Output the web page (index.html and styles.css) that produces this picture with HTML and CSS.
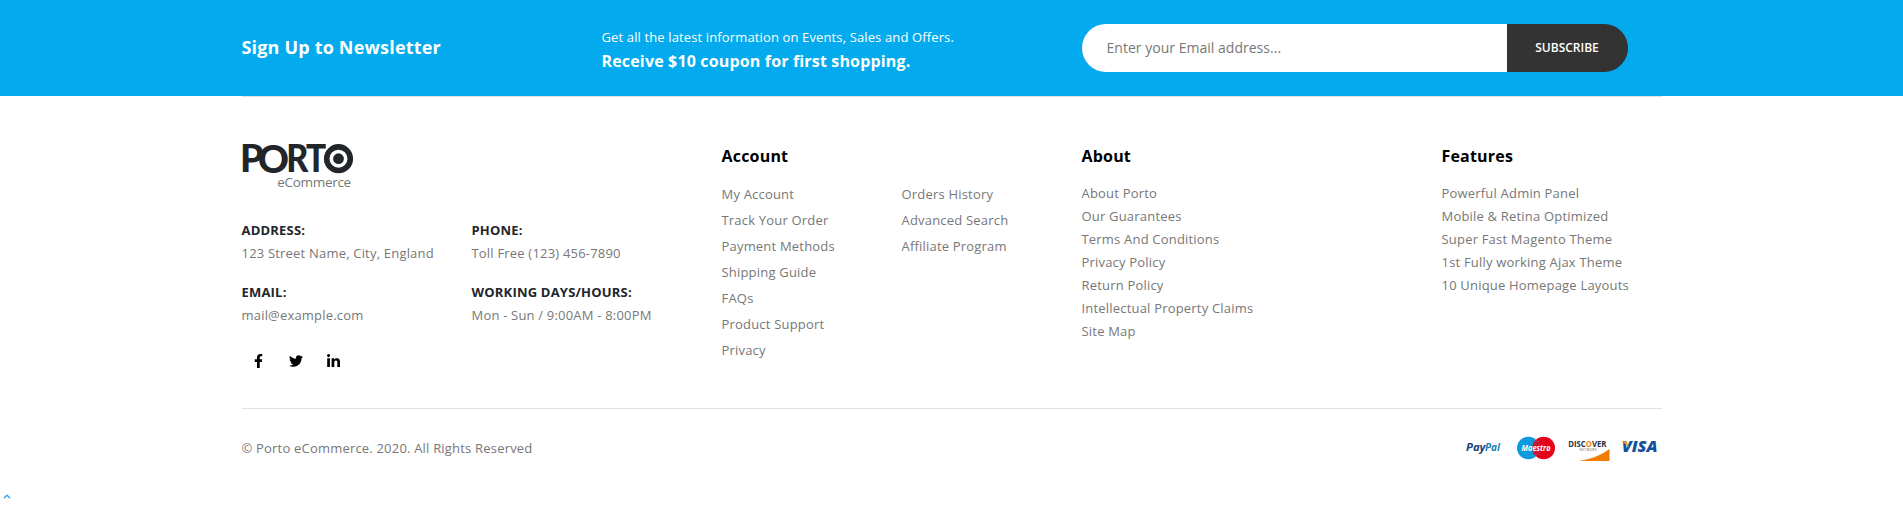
FILE: index.html
```html
<!DOCTYPE html>
<html lang="en">
<head>
<meta charset="utf-8">
<title>Porto eCommerce</title>
<link rel="stylesheet" href="styles.css">
</head>
<body>
<section class="newsletter">
  <div class="container newsletter-row">
    <h4 class="newsletter-title">Sign Up to Newsletter</h4>
    <div class="newsletter-info">
      <p>Get all the latest information on Events, Sales and Offers.</p>
      <strong>Receive $10 coupon for first shopping.</strong>
    </div>
    <form class="newsletter-form">
      <input type="email" placeholder="Enter your Email address..." aria-label="Email">
      <button type="button">SUBSCRIBE</button>
    </form>
  </div>
</section>
<footer class="container">
  <div class="footer-top">
    <div class="about-store">
      <svg class="logo" width="112" height="46" viewBox="0 0 112 46" role="img" aria-label="Porto eCommerce">
        <text class="logo-name" x="-2" y="28">P</text>
        <text class="logo-name logo-o" x="15.700" y="28.600">O</text>
        <text class="logo-name" transform="translate(44.200 28) scale(.91 1)">R</text>
        <text class="logo-name" transform="translate(64 28) scale(.89 1)">T</text>
        <circle cx="96.500" cy="14.700" r="11.800" class="logo-ring"/>
        <circle cx="96.500" cy="14.700" r="5.400" class="logo-dot"/>
        <text class="logo-sub" x="35.200" y="42.500" textLength="74">eCommerce</text>
      </svg>
      <dl class="contact">
        <div><dt>ADDRESS:</dt><dd>123 Street Name, City, England</dd></div>
        <div><dt>PHONE:</dt><dd>Toll Free (123) 456-7890</dd></div>
        <div><dt>EMAIL:</dt><dd>mail@example.com</dd></div>
        <div><dt>WORKING DAYS/HOURS:</dt><dd>Mon - Sun / 9:00AM - 8:00PM</dd></div>
      </dl>
      <div class="social">
        <a href="#" aria-label="Facebook"><svg width="9" height="14" viewBox="0 0 320 512"><path d="M279.14 288l14.22-92.66h-88.91v-60.13c0-25.35 12.42-50.06 52.24-50.06h40.42V6.26S260.43 0 225.36 0c-73.22 0-121.08 44.38-121.08 124.72v70.62H22.89V288h81.39v224h100.17V288z"/></svg></a>
        <a href="#" aria-label="Twitter"><svg width="14" height="14" viewBox="0 0 512 512"><path d="M459.37 151.716c.325 4.548.325 9.097.325 13.645 0 138.72-105.583 298.558-298.558 298.558-59.452 0-114.68-17.219-161.137-47.106 8.447.974 16.568 1.299 25.34 1.299 49.055 0 94.213-16.568 130.274-44.832-46.132-.975-84.792-31.188-98.112-72.772 6.498.974 12.995 1.624 19.818 1.624 9.421 0 18.843-1.3 27.614-3.573-48.081-9.747-84.143-51.98-84.143-102.985v-1.299c13.969 7.797 30.214 12.67 47.431 13.319-28.264-18.843-46.781-51.005-46.781-87.391 0-19.492 5.197-37.36 14.294-52.954 51.655 63.675 129.3 105.258 216.365 109.807-1.624-7.797-2.599-15.918-2.599-24.04 0-57.828 46.782-104.934 104.934-104.934 30.213 0 57.502 12.67 76.67 33.137 23.715-4.548 46.456-13.32 66.599-25.34-7.798 24.366-24.366 44.833-46.132 57.827 21.117-2.273 41.584-8.122 60.426-16.243-14.292 20.791-32.161 39.308-52.628 54.253z"/></svg></a>
        <a href="#" aria-label="LinkedIn"><svg width="13" height="14" viewBox="0 0 448 480"><path d="M100.28 448H7.4V148.9h92.88zM53.79 108.1C24.09 108.1 0 83.5 0 53.8a53.79 53.79 0 0 1 107.58 0c0 29.7-24.1 54.3-53.79 54.3zM447.9 448h-92.68V302.4c0-34.7-.7-79.2-48.29-79.2-48.29 0-55.69 37.7-55.69 76.7V448h-92.78V148.9h89.08v40.8h1.3c12.4-23.5 42.69-48.3 87.88-48.3 94 0 111.28 61.9 111.28 142.3V448z"/></svg></a>
      </div>
    </div>
    <div class="widget">
      <h4>Account</h4>
      <div class="account-links">
        <ul>
          <li>My Account</li><li>Track Your Order</li><li>Payment Methods</li><li>Shipping Guide</li><li>FAQs</li><li>Product Support</li><li>Privacy</li>
        </ul>
        <ul>
          <li>Orders History</li><li>Advanced Search</li><li>Affiliate Program</li>
        </ul>
      </div>
    </div>
    <div class="widget">
      <h4>About</h4>
      <ul>
        <li>About Porto</li><li>Our Guarantees</li><li>Terms And Conditions</li><li>Privacy Policy</li><li>Return Policy</li><li>Intellectual Property Claims</li><li>Site Map</li>
      </ul>
    </div>
    <div class="widget">
      <h4>Features</h4>
      <ul>
        <li>Powerful Admin Panel</li><li>Mobile &amp; Retina Optimized</li><li>Super Fast Magento Theme</li><li>1st Fully working Ajax Theme</li><li>10 Unique Homepage Layouts</li>
      </ul>
    </div>
  </div>
  <div class="footer-bottom">
    <p>© Porto eCommerce. 2020. All Rights Reserved</p>
    <svg class="payments" width="200" height="30" viewBox="0 0 200 30" role="img" aria-label="Payment methods">
      <text class="paypal" x="5" y="17.5" textLength="19.5" lengthAdjust="spacingAndGlyphs">Pay</text>
      <text class="paypal pal" x="24" y="17.5" textLength="15" lengthAdjust="spacingAndGlyphs">Pal</text>
      <circle cx="67.3" cy="15" r="11.3" fill="#0a9add"/>
      <circle cx="82.7" cy="15" r="11.3" fill="#e5031c"/>
      <path d="M72 8.5h6M71.5 11h7M71.5 19h7M72 21.5h6" stroke="#98406d" stroke-width="1.2"/>
      <text class="maestro" x="60.5" y="18" textLength="29" lengthAdjust="spacingAndGlyphs">Maestro</text>
      <text class="discover" x="107.2" y="13.8" textLength="38.3" lengthAdjust="spacingAndGlyphs">DISC<tspan fill="#ee8b1c">O</tspan>VER</text>
      <text class="network" x="118.5" y="18.2" textLength="17">NETWORK</text>
      <path d="M118.5 28q18-3 30-12v12z" fill="#f07d00"/>
      <text class="visa" x="160.8" y="19.4" textLength="35.8" lengthAdjust="spacingAndGlyphs">VISA</text>
      <path d="M160.3 8.4h5.500l2.200 6q-3-4-7.700-6z" fill="#f0a01e"/>
    </svg>
  </div>
</footer>
<svg class="to-top" width="8" height="5" viewBox="0 0 8 5"><path d="M.8 4.2 4 1.2l3.200 3" /></svg>
</body>
</html>
```
FILE: styles.css
```css
* { box-sizing: border-box; }
body {
  margin: 0;
  background: #fff;
  color: #777;
  font: 13px/23px "Open Sans", sans-serif;
  letter-spacing: 0.195px;
  overflow: hidden;
}
h4, p, ul, dl, dd { margin: 0; padding: 0; }
ul { list-style: none; }
.container { width: 1440px; margin: 0 auto; padding: 0 10px; }

.newsletter { height: 96px; background: #03abee; color: #fff; }
.newsletter-row { display: grid; grid-template-columns: 360px 480px 546px; align-items: center; height: 96px; }
.newsletter-title { padding-bottom: 2px; font-size: 18px; line-height: 24px; font-weight: 700; letter-spacing: 0.01em; }
.newsletter-info { padding-top: 2px; letter-spacing: 0.01em; }
.newsletter-info p { line-height: 24px; letter-spacing: 0.01em; }
.newsletter-info strong { display: block; font-size: 16px; line-height: 24px; letter-spacing: 0.01em; }
.newsletter-form { display: flex; height: 48px; }
.newsletter-form input {
  flex: 1;
  min-width: 0;
  border: 0;
  padding: 0 25px 1px;
  border-radius: 24px 0 0 24px;
  background: #fff;
  font: 14px "Open Sans", sans-serif;
  letter-spacing: 0.02px;
}
.newsletter-form input::placeholder { color: #777; opacity: 1; }
.newsletter-form button {
  width: 121px;
  border: 0;
  padding: 0 0 2px;
  border-radius: 0 24px 24px 0;
  background: #333;
  color: #fff;
  font: 600 12px "Open Sans", sans-serif;
}

.footer-top {
  display: grid;
  grid-template-columns: 480px 360px 360px 220px;
  height: 313px;
  padding-top: 48px;
  border-top: 1px solid #e1e1e1;
  border-bottom: 1px solid #e1e1e1;
}
.logo { display: block; margin-top: -1px; overflow: visible; }
.logo-name { font: 900 37.500px Lato, sans-serif; fill: #222529; letter-spacing: 0; }
.logo-o { font-size: 38.500px; }
.logo-ring { fill: none; stroke: #222529; stroke-width: 5.600px; }
.logo-dot { fill: #222529; }
.logo-sub { font: 13.500px "Open Sans", sans-serif; fill: #777; letter-spacing: 0; }
.contact { display: grid; grid-template-columns: 230px 230px; row-gap: 16px; margin-top: 29px; }
.contact dt { color: #222529; font-weight: 700; }
.social { display: flex; margin: 15px 0 0 -2px; }
.social a { display: flex; width: 37.500px; height: 37px; align-items: center; justify-content: center; }

.widget h4 { margin-bottom: 15px; color: #000; font-size: 16px; line-height: 22px; }
.account-links { display: grid; grid-template-columns: 180px 180px; margin-top: -1px; line-height: 26px; }

.footer-bottom { display: flex; justify-content: space-between; align-items: flex-start; padding-top: 24px; }
.footer-bottom p { margin-top: 4px; }
.payments { margin-right: 0.500px; letter-spacing: 0; }
.paypal { font: italic 700 11px "Open Sans", sans-serif; fill: #1b3f77; }
.pal { fill: #1d7fb5; }
.maestro { font: italic 700 8.500px "Open Sans", sans-serif; fill: #fff; }
.discover { font: 700 8px "Open Sans", sans-serif; fill: #333; }
.network { font: 3px "Open Sans", sans-serif; fill: #555; }
.visa { font: italic 800 15px "Open Sans", sans-serif; fill: #12509c; }
.to-top { position: absolute; left: 3px; top: 494px; fill: none; stroke: #35a6f0; stroke-width: 1.300px; }
```
